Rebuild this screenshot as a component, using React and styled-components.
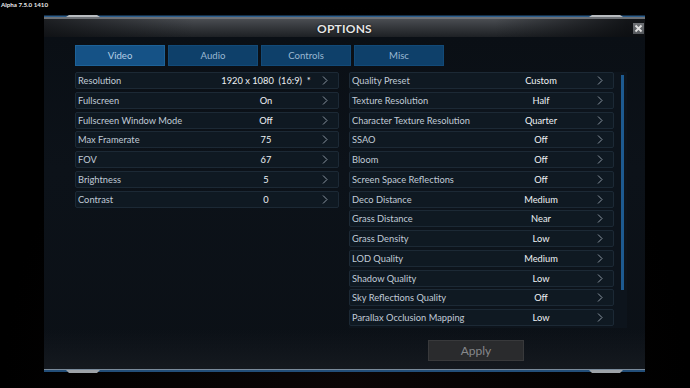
import React from "react";
import styled, { createGlobalStyle } from "styled-components";

const Global = createGlobalStyle`
  html, body { margin: 0; padding: 0; background: #000; }
  body { font-family: Lato, "Open Sans", sans-serif; width: 690px; height: 388px; overflow: hidden; }
`;

const Page = styled.div`
  width: 690px;
  height: 388px;
  background: radial-gradient(ellipse at 50% 100%, #0b0606 0%, #000 70%);
  display: flex;
  flex-direction: column;
`;

const Version = styled.div`
  height: 15px;
  padding: 1px 0 0 1px;
  box-sizing: border-box;
  font-family: Lato, sans-serif;
  font-size: 6.2px;
  font-weight: bold;
  color: #ececec;
  line-height: 8px;
`;

const Panel = styled.div`
  margin-left: 44px;
  width: 601px;
  display: flex;
  flex-direction: column;
`;

const Edge = styled.svg`
  display: block;
  width: 601px;
  height: ${(p) => p.$h}px;
`;

const Header = styled.div`
  height: 18px;
  display: grid;
  grid-template-columns: 1fr auto 1fr;
  align-items: center;
  background:
    linear-gradient(90deg, rgba(10,12,15,0.7) 0%, rgba(10,12,15,0) 25%, rgba(10,12,15,0) 75%, rgba(10,12,15,0.85) 97%),
    linear-gradient(180deg, #4a4d52 0%, #35383c 45%, #1d2024 100%);
`;

const Title = styled.div`
  grid-column: 2;
  font-family: Lato, sans-serif;
  font-size: 12px;
  font-weight: bold;
  color: #e6e6e6;
  letter-spacing: 0.2px;
  text-shadow: 0 0 2px #000;
`;

const Close = styled.div`
  grid-column: 3;
  justify-self: end;
  margin-right: 1px;
  width: 11px;
  height: 11px;
  background: linear-gradient(180deg, #6e7175, #55585c);
  display: flex;
  align-items: center;
  justify-content: center;
`;

const Body = styled.div`
  height: 332px;
  box-sizing: border-box;
  padding: 8px 0 0 31px;
  background:
    linear-gradient(180deg, rgba(0,0,0,0) 88%, rgba(30,34,40,0.5) 100%),
    linear-gradient(180deg, #0a0f15 0%, #0c1219 40%, #0b1016 100%);
  display: flex;
  flex-direction: column;
`;

const Tabs = styled.div`
  display: flex;
  gap: 3px;
  height: 21px;
`;

const Tab = styled.div`
  width: 90px;
  display: flex;
  align-items: center;
  justify-content: center;
  font-size: 9.6px;
  color: ${(p) => (p.$active ? "#b4cee4" : "#9ab8d2")};
  background: ${(p) => (p.$active ? "#155286" : "#0e406a")};
  border: 1px solid ${(p) => (p.$active ? "#1d6298" : "#124a78")};
  box-sizing: border-box;
`;

const Columns = styled.div`
  margin-top: 6px;
  display: grid;
  grid-template-columns: 264px 278px;
  column-gap: 10px;
  align-items: start;
`;

const List = styled.div`
  display: flex;
  flex-direction: column;
  gap: 2.75px;
`;

const RightBox = styled.div`
  display: flex;
  flex-direction: column;
`;

const RightList = styled.div`
  display: grid;
  grid-template-columns: 265px 13px;
  background: #0d141c;
  padding-bottom: 2px;
`;

const Scroll = styled.div`
  margin: 3px 0 0 7px;
  width: 3px;
  height: 215px;
  background: #1d5a90;
`;

const Row = styled.div`
  height: 17px;
  box-sizing: border-box;
  display: grid;
  grid-template-columns: 1fr 112px 16px;
  align-items: center;
  background: #0f1922;
  border: 1px solid #1c2935;
  border-radius: 2px;
  padding-left: 2px;
`;

const Label = styled.span`
  font-size: 9.3px;
  color: #c0cbd7;
  white-space: nowrap;
`;

const Value = styled.span`
  font-size: 9.3px;
  color: #eef1f4;
  text-align: center;
  white-space: pre;
`;

const Chev = styled.svg`
  width: 6px;
  height: 9px;
  justify-self: start;
`;

const Apply = styled.div`
  margin: 12px 0 0 79px;
  width: 96px;
  height: 21px;
  box-sizing: border-box;
  background: #2a2b2d;
  border: 1px solid #38393b;
  display: flex;
  align-items: center;
  justify-content: center;
  font-size: 12px;
  color: #86888b;
`;

const Chevron = () => (
  <Chev viewBox="0 0 6 9">
    <polyline points="1,0.5 5,4.5 1,8.5" fill="none" stroke="#8b96a1" strokeWidth="1" />
  </Chev>
);

const Setting = ({ label, value }) => (
  <Row>
    <Label>{label}</Label>
    <Value>{value}</Value>
    <Chevron />
  </Row>
);

const left = [
  ["Resolution", "1920 x 1080  (16:9)  *"],
  ["Fullscreen", "On"],
  ["Fullscreen Window Mode", "Off"],
  ["Max Framerate", "75"],
  ["FOV", "67"],
  ["Brightness", "5"],
  ["Contrast", "0"],
];

const right = [
  ["Quality Preset", "Custom"],
  ["Texture Resolution", "Half"],
  ["Character Texture Resolution", "Quarter"],
  ["SSAO", "Off"],
  ["Bloom", "Off"],
  ["Screen Space Reflections", "Off"],
  ["Deco Distance", "Medium"],
  ["Grass Distance", "Near"],
  ["Grass Density", "Low"],
  ["LOD Quality", "Medium"],
  ["Shadow Quality", "Low"],
  ["Sky Reflections Quality", "Off"],
  ["Parallax Occlusion Mapping", "Low"],
];

const TopEdge = () => (
  <Edge $h={4} viewBox="0 0 601 4">
    <rect x="0" y="0.5" width="601" height="1.5" fill="#2b5d8c" />
    <rect x="0" y="2" width="601" height="2" fill="#6c7075" />
    <polygon points="22,2 25,0 53,0 56,2" fill="#b8bcc0" />
    <polygon points="545,2 548,0 576,0 579,2" fill="#b8bcc0" />
  </Edge>
);

const BottomEdge = () => (
  <Edge $h={5} viewBox="0 0 601 5">
    <rect x="0" y="0" width="601" height="1" fill="#7a8a9a" />
    <rect x="0" y="1" width="601" height="2" fill="#234e78" />
    <polygon points="22,1 25,4 53,4 56,1" fill="#9ea3a8" />
    <polygon points="545,1 548,4 576,4 579,1" fill="#9ea3a8" />
  </Edge>
);

export default function App() {
  return (
    <Page>
      <Global />
      <Version>Alpha 7.5.0 1410</Version>
      <Panel>
        <TopEdge />
        <Header>
          <Title>OPTIONS</Title>
          <Close>
            <svg width="9" height="9" viewBox="0 0 9 9">
              <path d="M1.5 1.5 L7.5 7.5 M7.5 1.5 L1.5 7.5" stroke="#e0e0e0" strokeWidth="1.8" />
            </svg>
          </Close>
        </Header>
        <Body>
          <Tabs>
            <Tab $active>Video</Tab>
            <Tab>Audio</Tab>
            <Tab>Controls</Tab>
            <Tab>Misc</Tab>
          </Tabs>
          <Columns>
            <List>
              {left.map(([l, v]) => (
                <Setting key={l} label={l} value={v} />
              ))}
            </List>
            <RightBox>
              <RightList>
                <List>
                  {right.map(([l, v]) => (
                    <Setting key={l} label={l} value={v} />
                  ))}
                </List>
                <Scroll />
              </RightList>
              <Apply>Apply</Apply>
            </RightBox>
          </Columns>
        </Body>
        <BottomEdge />
      </Panel>
    </Page>
  );
}
